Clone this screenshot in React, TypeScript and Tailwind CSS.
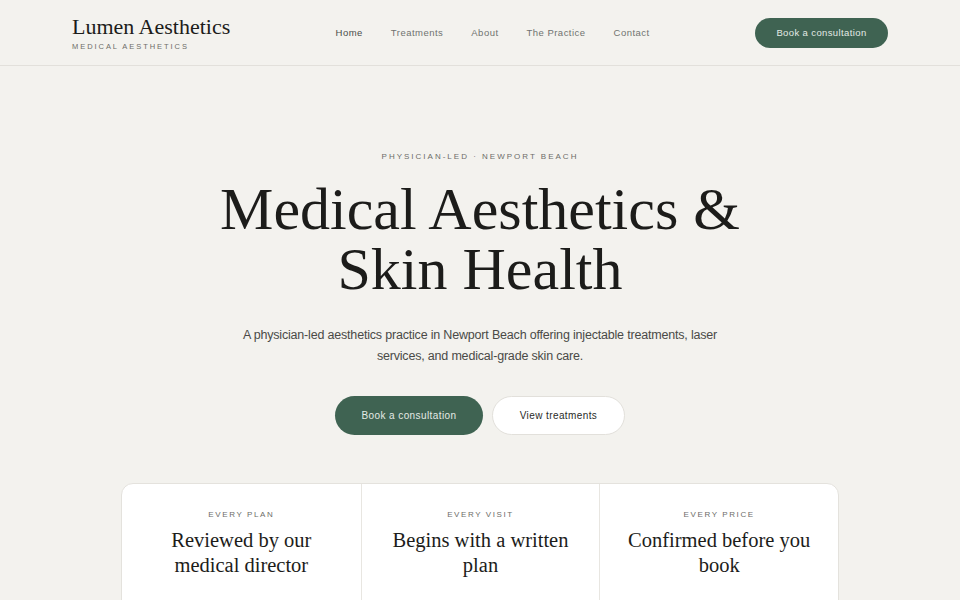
import React from 'react';

const serif = { fontFamily: "Georgia, 'Liberation Serif', serif" };

const navLinks = ['Home', 'Treatments', 'About', 'The Practice', 'Contact'];

const promises = [
  { label: 'Every plan', title: 'Reviewed by our medical director' },
  { label: 'Every visit', title: 'Begins with a written plan' },
  { label: 'Every price', title: 'Confirmed before you book' },
];

const App = () => {
  return (
    <div className="min-h-screen bg-[#f3f2ee] text-[#1f1f1d] font-['Liberation_Sans',Arial,sans-serif]">
      <header className="border-b border-[#e2e0db]">
        <div className="mx-auto flex h-[65px] max-w-[816px] items-center justify-between">
          <div className="pt-[1px]">
            <div style={serif} className="text-[22px] leading-[24px] text-[#1c1c1a]">Lumen Aesthetics</div>
            <div className="mt-[3px] text-[7.5px] leading-[10px] tracking-[0.26em] text-[#6d6d68] uppercase">Medical Aesthetics</div>
          </div>
          <nav className="mt-[2px] flex items-center gap-[28px]">
            {navLinks.map((link) => (
              <a key={link} href="#" className={`text-[9.5px] tracking-[0.05em] ${link === 'Home' ? 'text-[#4a4d4a]' : 'text-[#707270]'}`}>
                {link}
              </a>
            ))}
          </nav>
          <button className="h-[30px] w-[133px] rounded-full bg-[#3f6352] pt-[1px] text-[9.5px] tracking-[0.04em] text-[#e3eae5]">
            Book a consultation
          </button>
        </div>
      </header>

      <main className="mx-auto max-w-[816px]">
        <section className="flex flex-col items-center pt-[85px] text-center">
          <div className="text-[8px] leading-[12px] tracking-[0.25em] text-[#6d6d68] uppercase">Physician-led · Newport Beach</div>
          <h1 style={serif} className="mt-[16px] text-[60px] leading-[60px] text-[#1c1c1a]">
            Medical Aesthetics &amp;
            <br />
            Skin Health
          </h1>
          <p className="mt-[26px] max-w-[480px] text-[12.5px] leading-[21px] tracking-[-0.015em] text-[#4a4a47]">
            A physician-led aesthetics practice in Newport Beach offering injectable treatments, laser services, and medical-grade skin care.
          </p>
          <div className="mt-[29px] flex gap-[9px]">
            <button className="h-[39px] w-[148px] rounded-full bg-[#3f6352] text-[10px] tracking-[0.04em] text-[#e3eae5]">
              Book a consultation
            </button>
            <button className="h-[39px] w-[133px] rounded-full border border-[#e2e0db] bg-white text-[10px] tracking-[0.04em] text-[#2a2b29]">
              View treatments
            </button>
          </div>
        </section>

        <section className="mx-auto mt-[48px] grid max-w-[718px] grid-cols-3 rounded-t-[12px] border border-[#e4e2dd] bg-white">
          {promises.map((p, i) => (
            <div key={p.label} className={`flex flex-col items-center px-[22px] pt-[25px] pb-[30px] text-center ${i > 0 ? 'border-l border-[#e8e6e1]' : ''}`}>
              <div className="text-[8px] leading-[12px] tracking-[0.2em] text-[#6d6d68] uppercase">{p.label}</div>
              <div style={serif} className="mt-[7px] text-[20.5px] leading-[25px] text-[#1c1c1a]">{p.title}</div>
            </div>
          ))}
        </section>
      </main>
    </div>
  );
};

export default App;
